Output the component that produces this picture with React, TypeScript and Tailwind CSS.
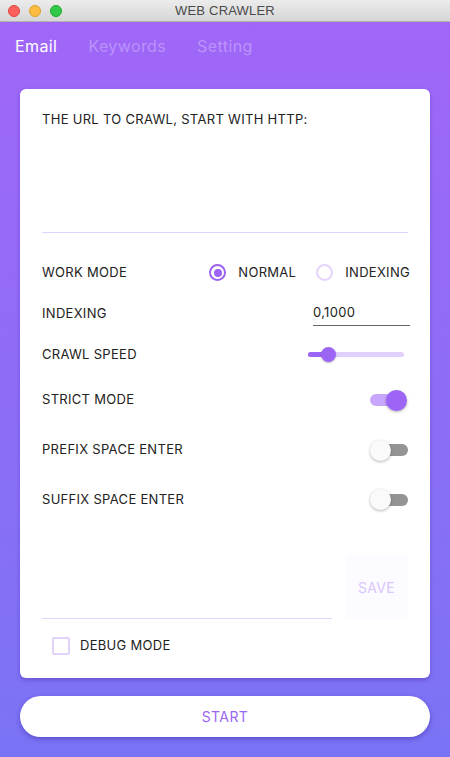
import React, { useState } from 'react';

const font = { fontFamily: 'Inter, Roboto, "Noto Sans", sans-serif' };

const Radio: React.FC<{ checked: boolean; label: string; onClick: () => void }> = ({ checked, label, onClick }) => (
  <button onClick={onClick} className="flex items-center gap-[12px]">
    <span
      className={`w-[17px] h-[17px] rounded-full border-2 flex items-center justify-center ${
        checked ? 'border-[#9c63f4]' : 'border-[#e4d4fc]'
      }`}
    >
      {checked && <span className="w-[8px] h-[8px] rounded-full bg-[#9c63f4]" />}
    </span>
    <span className="text-[13px] tracking-[0.3px] text-[#222]">{label}</span>
  </button>
);

const Toggle: React.FC<{ on: boolean; onClick: () => void }> = ({ on, onClick }) => (
  <button onClick={onClick} className="relative w-[40px] h-[22px] flex items-center">
    <span
      className={`absolute h-[12px] rounded-full ${
        on ? 'left-[2px] right-[4px] bg-[#c8a7fa]' : 'left-[12px] right-0 bg-[#949494]'
      }`}
    />
    <span
      className={`absolute w-[21px] h-[21px] rounded-full shadow-[0_1px_3px_rgba(0,0,0,0.3)] ${
        on ? 'right-[1px] bg-[#9d65f6]' : 'left-[2px] bg-[#fafafa]'
      }`}
    />
  </button>
);

const Row: React.FC<{ label: string; h: string; children?: React.ReactNode }> = ({ label, h, children }) => (
  <div className={`flex items-center justify-between ${h}`}>
    <span className="text-[13px] tracking-[0.3px] text-[#222]">{label}</span>
    {children}
  </div>
);

export default function App() {
  const [mode, setMode] = useState<'normal' | 'indexing'>('normal');
  const [strict, setStrict] = useState(true);
  const [prefix, setPrefix] = useState(false);
  const [suffix, setSuffix] = useState(false);
  const [debug, setDebug] = useState(false);
  const [tab, setTab] = useState('Email');

  return (
    <div className="w-[450px] h-[757px] flex flex-col overflow-hidden" style={font}>
      {/* title bar */}
      <div className="relative h-[22px] flex items-center justify-center bg-gradient-to-b from-[#ececec] to-[#d6d6d6] border-b border-[#b3b3b3]">
        <div className="absolute left-[8px] top-[5px] flex gap-[9px]">
          <span className="w-[12px] h-[12px] rounded-full bg-[#fc605c] border border-[#e0443e]" />
          <span className="w-[12px] h-[12px] rounded-full bg-[#fdbc40] border border-[#dea123]" />
          <span className="w-[12px] h-[12px] rounded-full bg-[#34c84a] border border-[#1aab29]" />
        </div>
        <span className="text-[13px] text-[#4a4a4a] tracking-[0.2px]" style={{ fontFamily: '"Liberation Sans", Arial, sans-serif' }}>
          WEB CRAWLER
        </span>
      </div>

      <div className="flex-1 flex flex-col px-[20px] bg-gradient-to-b from-[#a066f8] to-[#7a73f5]">
        {/* tabs */}
        <div className="h-[48px] flex items-center gap-[31px] -ml-[5px]">
          {['Email', 'Keywords', 'Setting'].map((t) => (
            <button
              key={t}
              onClick={() => setTab(t)}
              className={`text-[16px] tracking-[0.4px] ${tab === t ? 'text-white' : 'text-white/30'}`}
            >
              {t}
            </button>
          ))}
        </div>

        {/* card */}
        <div className="mt-[19px] bg-white rounded-[6px] shadow-[0_2px_4px_rgba(60,30,140,0.35)] px-[22px] pt-[21px] pb-[5px]">
          <div className="h-[123px] flex flex-col border-b border-[#e2d3fc]">
            <span className="text-[13px] tracking-[0.3px] text-[#222]">THE URL TO CRAWL, START WITH HTTP:</span>
            <textarea className="flex-1 resize-none outline-none text-[13px] mt-1" />
          </div>

          <div className="mt-[19px] flex flex-col">
            <Row label="WORK MODE" h="h-[41px]">
              <div className="flex items-center gap-[20px] -mr-[2px]">
                <Radio checked={mode === 'normal'} label="NORMAL" onClick={() => setMode('normal')} />
                <Radio checked={mode === 'indexing'} label="INDEXING" onClick={() => setMode('indexing')} />
              </div>
            </Row>
            <Row label="INDEXING" h="h-[41px]">
              <input
                defaultValue="0,1000"
                className="w-[97px] -mr-[2px] border-b border-[#666] outline-none text-[13px] tracking-[0.3px] text-[#222] pb-[3px] pt-[2px]"
              />
            </Row>
            <Row label="CRAWL SPEED" h="h-[41px]">
              <div className="relative w-[96px] h-[14px] flex items-center mr-[4px]">
                <span className="absolute inset-x-0 h-[5px] rounded-full bg-[#e1d0fc]" />
                <span className="absolute left-0 w-[20px] h-[5px] rounded-full bg-[#9d65f6]" />
                <span className="absolute left-[13px] w-[15px] h-[15px] rounded-full bg-[#9d65f6] shadow-[0_1px_2px_rgba(0,0,0,0.25)]" />
              </div>
            </Row>
            <Row label="STRICT MODE" h="h-[50px]">
              <Toggle on={strict} onClick={() => setStrict(!strict)} />
            </Row>
            <Row label="PREFIX SPACE ENTER" h="h-[50px]">
              <Toggle on={prefix} onClick={() => setPrefix(!prefix)} />
            </Row>
            <Row label="SUFFIX SPACE ENTER" h="h-[49px]">
              <Toggle on={suffix} onClick={() => setSuffix(!suffix)} />
            </Row>
          </div>

          <div className="mt-[31px] flex items-end gap-[13px]">
            <div className="flex-1 border-b border-[#e2d3fc]" />
            <button className="w-[63px] h-[64px] rounded-[4px] bg-[#fcfbff] text-[14px] tracking-[0.3px] text-[#dbc6fc]">
              SAVE
            </button>
          </div>

          <div className="h-[54px] flex items-center pl-[10px] gap-[10px]">
            <button
              onClick={() => setDebug(!debug)}
              className={`w-[18px] h-[18px] rounded-[2px] border-2 ${debug ? 'bg-[#9d65f6] border-[#9d65f6]' : 'border-[#e2d3fc]'}`}
            />
            <span className="text-[13px] tracking-[0.3px] text-[#222]">DEBUG MODE</span>
          </div>
        </div>

        <button className="mt-[18px] h-[41px] rounded-full bg-white text-[14px] text-[#9b66f3] tracking-[0.4px] shadow-[0_2px_5px_rgba(50,30,150,0.45)]">
          START
        </button>
      </div>
    </div>
  );
}
